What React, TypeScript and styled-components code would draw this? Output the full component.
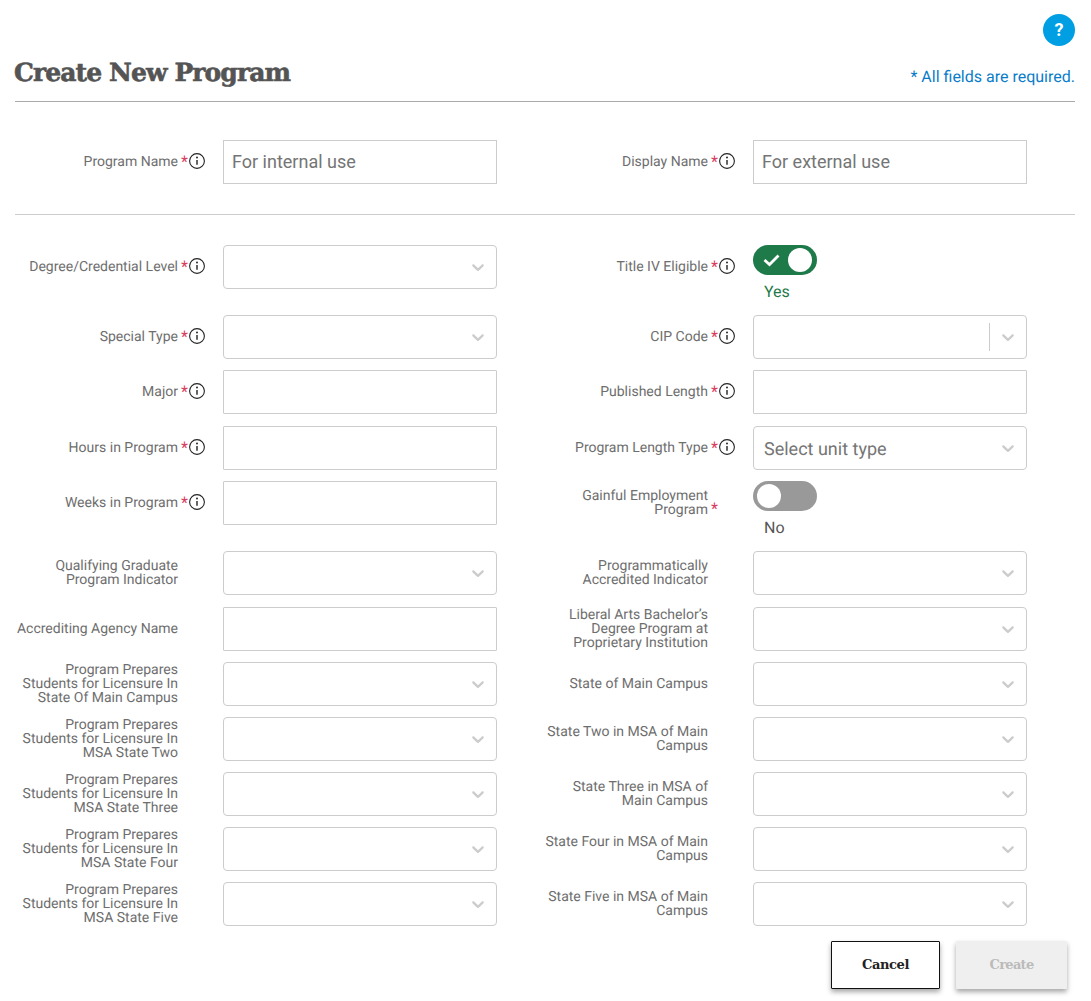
import React, { FunctionComponent, ReactNode } from 'react';
import styled, { createGlobalStyle } from 'styled-components';

const GlobalStyle = createGlobalStyle`
  html, body {
    margin: 0;
    background: #fff;
    font-family: Roboto, "Liberation Sans", sans-serif;
    text-rendering: geometricPrecision;
  }
`;

const Page = styled.div`
  width: 1091px;
  height: 1001px;
  box-sizing: border-box;
  padding: 14px 16px 0 15px;
  overflow: hidden;
`;

const HelpRow = styled.div`
  display: flex;
  justify-content: flex-end;
`;

const HelpButton = styled.button`
  width: 32px;
  height: 32px;
  padding: 0;
  border: 0;
  border-radius: 50%;
  background: #009fe3;
  color: #fff;
  font-family: Roboto, sans-serif;
  font-size: 18px;
  font-weight: 700;
  line-height: 32px;
`;

const Header = styled.div`
  display: flex;
  justify-content: space-between;
  align-items: flex-end;
  height: 56px;
  padding-bottom: 12px;
  box-sizing: border-box;
  border-bottom: 1px solid #aaa;
`;

const Title = styled.h1`
  margin: 0 0 -1px -1px;
  font-family: "DejaVu Serif", serif;
  font-size: 25px;
  font-weight: 700;
  line-height: 34px;
  letter-spacing: -0.9px;
  color: #545454;
  -webkit-text-stroke: 0.6px #545454;
`;

const RequiredNote = styled.div`
  font-size: 16px;
  line-height: 24px;
  color: #0a7cc9;
`;

const NameSection = styled.div`
  padding: 38px 0 30px;
  border-bottom: 1px solid #ccc;
`;

const Details = styled.div`
  padding-top: 30px;
`;

const Row = styled.div<{ $pitch: number }>`
  display: grid;
  grid-template-columns: 482px 482px;
  column-gap: 48px;
  height: ${(p) => p.$pitch}px;
`;

const Field = styled.div`
  display: grid;
  grid-template-columns: 190px 274px;
  column-gap: 18px;
  align-items: start;
`;

const LabelCell = styled.div<{ $bottom?: boolean }>`
  display: flex;
  justify-content: flex-end;
  align-items: ${(p) => (p.$bottom ? 'flex-end' : 'center')};
  min-height: 44px;
  padding-bottom: ${(p) => (p.$bottom ? '8px' : '0')};
  box-sizing: border-box;
`;

const LabelText = styled.label`
  width: 163px;
  flex: none;
  text-align: right;
  font-size: 14px;
  line-height: 14px;
  color: #6e6e6e;
`;

const Marks = styled.div`
  width: 27px;
  flex: none;
  display: flex;
  align-items: center;
  height: 16px;
`;

const Star = styled.span`
  width: 11px;
  padding-left: 3px;
  box-sizing: border-box;
  font-size: 16px;
  line-height: 16px;
  color: #d8405f;
`;

const InfoSvg = styled.svg`
  width: 16px;
  height: 16px;
  margin-bottom: 2px;
  flex: none;
`;

const TextBox = styled.input<{ $square?: boolean }>`
  display: block;
  width: 100%;
  height: 44px;
  box-sizing: border-box;
  padding: 0 8px 2px;
  border: 1px solid #ccc;
  border-radius: ${(p) => (p.$square ? '0' : '1px')};
  outline: none;
  background: #fff;
  font-family: Roboto, sans-serif;
  font-size: 18px;
  color: #333;

  &::placeholder {
    color: #757575;
    opacity: 1;
  }
`;

const SelectBox = styled.div`
  display: flex;
  align-items: center;
  height: 44px;
  box-sizing: border-box;
  border: 1px solid #ccc;
  border-radius: 4px;
  background: #fff;
`;

const SelectValue = styled.div`
  flex: 1;
  padding: 2px 0 0 10px;
  font-size: 18px;
  color: #757575;
`;

const Separator = styled.span`
  width: 1px;
  height: 28px;
  background: #ccc;
`;

const Chevron = styled.svg`
  width: 20px;
  height: 20px;
  margin: 0 8px;
  fill: #ccc;
  flex: none;
`;

const ToggleWrap = styled.div`
  display: flex;
  flex-direction: column;
  align-items: flex-start;
`;

const Track = styled.div<{ $on?: boolean }>`
  display: flex;
  align-items: center;
  justify-content: ${(p) => (p.$on ? 'space-between' : 'flex-start')};
  width: 64px;
  height: 30px;
  box-sizing: border-box;
  padding: 0 5px 0 ${(p) => (p.$on ? '10px' : '4px')};
  border-radius: 15px;
  background: ${(p) => (p.$on ? '#1f7a4a' : '#999')};
`;

const Knob = styled.span`
  width: 24px;
  height: 24px;
  border-radius: 50%;
  background: #fff;
`;

const ToggleText = styled.span<{ $on?: boolean }>`
  margin: 7px 0 0 11px;
  font-size: 16px;
  line-height: 19px;
  color: ${(p) => (p.$on ? '#1f7a4a' : '#555')};
`;

const Footer = styled.div`
  display: flex;
  justify-content: flex-end;
  gap: 16px;
  margin: 15px 8px 0 0;
`;

const Button = styled.button<{ $disabled?: boolean }>`
  height: 48px;
  width: ${(p) => (p.$disabled ? '111px' : '109px')};
  box-sizing: border-box;
  padding: 0 0 2px;
  border: ${(p) => (p.$disabled ? '0' : '1px solid #111')};
  border-radius: 1px;
  background: ${(p) => (p.$disabled ? '#f0efef' : '#fff')};
  box-shadow: 0 3px 5px rgba(0, 0, 0, 0.35);
  font-family: "DejaVu Serif", serif;
  font-size: 13px;
  font-weight: 700;
  letter-spacing: ${(p) => (p.$disabled ? '-0.7px' : '-0.4px')};
  color: ${(p) => (p.$disabled ? '#bbb' : '#222')};
`;

const InfoIcon: FunctionComponent = () => (
  <InfoSvg viewBox="0 0 16 16" fill="none">
    <circle cx="8" cy="8" r="7.4" stroke="#222" strokeWidth="1.1" />
    <circle cx="8" cy="4.5" r="0.95" fill="#222" />
    <path d="M8 7V11.8" stroke="#222" strokeWidth="1.4" />
  </InfoSvg>
);

const ChevronIcon: FunctionComponent = () => (
  <Chevron viewBox="0 0 20 20">
    <path d="M4.516 7.548c0.436-0.446 1.043-0.481 1.576 0l3.908 3.747 3.908-3.747c0.533-0.481 1.141-0.446 1.576 0 0.436 0.445 0.408 1.197 0 1.615-0.406 0.418-4.695 4.502-4.695 4.502-0.217 0.223-0.502 0.335-0.789 0.335s-0.572-0.112-0.79-0.335c0 0-4.287-4.084-4.695-4.502s-0.436-1.17 0-1.615z" />
  </Chevron>
);

type LabelProps = {
  text: ReactNode;
  required?: boolean;
  info?: boolean;
  bottom?: boolean;
};

const Label: FunctionComponent<LabelProps> = ({ text, required, info, bottom }) => (
  <LabelCell $bottom={bottom}>
    <LabelText>{text}</LabelText>
    <Marks>
      {required ? <Star>*</Star> : null}
      {info ? <InfoIcon /> : null}
    </Marks>
  </LabelCell>
);

const Select: FunctionComponent<{ value?: string; separator?: boolean }> = ({ value, separator }) => (
  <SelectBox>
    <SelectValue>{value}</SelectValue>
    {separator ? <Separator /> : null}
    <ChevronIcon />
  </SelectBox>
);

const Toggle: FunctionComponent<{ on?: boolean }> = ({ on }) => (
  <ToggleWrap>
    <Track $on={on}>
      {on ? (
        <svg width="18" height="16" viewBox="0 0 18 16" fill="none">
          <path d="M1.5 8L6.5 12.5L15.5 3.5" stroke="#fff" strokeWidth="2.8" />
        </svg>
      ) : null}
      <Knob />
    </Track>
    <ToggleText $on={on}>{on ? 'Yes' : 'No'}</ToggleText>
  </ToggleWrap>
);

type FieldDef = LabelProps & { control: ReactNode };

const sel = <Select />;
const txt = <TextBox />;

const rows: { pitch: number; left: FieldDef; right: FieldDef }[] = [
  {
    pitch: 70,
    left: { text: 'Degree/Credential Level', required: true, info: true, control: sel },
    right: { text: 'Title IV Eligible', required: true, info: true, control: <Toggle on /> },
  },
  {
    pitch: 55,
    left: { text: 'Special Type', required: true, info: true, control: sel },
    right: { text: 'CIP Code', required: true, info: true, control: <Select separator /> },
  },
  {
    pitch: 56,
    left: { text: 'Major', required: true, info: true, control: txt },
    right: { text: 'Published Length', required: true, info: true, control: txt },
  },
  {
    pitch: 55,
    left: { text: 'Hours in Program', required: true, info: true, control: txt },
    right: {
      text: 'Program Length Type',
      required: true,
      info: true,
      control: <Select value="Select unit type" />,
    },
  },
  {
    pitch: 70,
    left: { text: 'Weeks in Program', required: true, info: true, control: txt },
    right: { text: 'Gainful Employment Program', required: true, bottom: true, control: <Toggle /> },
  },
  {
    pitch: 56,
    left: { text: 'Qualifying Graduate Program Indicator', control: sel },
    right: { text: 'Programmatically Accredited Indicator', control: sel },
  },
  {
    pitch: 55,
    left: { text: 'Accrediting Agency Name', control: txt },
    right: { text: 'Liberal Arts Bachelor’s Degree Program at Proprietary Institution', control: sel },
  },
  {
    pitch: 55,
    left: { text: 'Program Prepares Students for Licensure In State Of Main Campus', control: sel },
    right: { text: 'State of Main Campus', control: sel },
  },
  {
    pitch: 55,
    left: { text: 'Program Prepares Students for Licensure In MSA State Two', control: sel },
    right: { text: 'State Two in MSA of Main Campus', control: sel },
  },
  {
    pitch: 55,
    left: { text: 'Program Prepares Students for Licensure In MSA State Three', control: sel },
    right: { text: 'State Three in MSA of Main Campus', control: sel },
  },
  {
    pitch: 55,
    left: { text: 'Program Prepares Students for Licensure In MSA State Four', control: sel },
    right: { text: 'State Four in MSA of Main Campus', control: sel },
  },
  {
    pitch: 44,
    left: { text: 'Program Prepares Students for Licensure In MSA State Five', control: sel },
    right: { text: 'State Five in MSA of Main Campus', control: sel },
  },
];

const renderField = ({ control, ...label }: FieldDef) => (
  <Field>
    <Label {...label} />
    {control}
  </Field>
);

export default function App() {
  return (
    <Page>
      <GlobalStyle />
      <HelpRow>
        <HelpButton>?</HelpButton>
      </HelpRow>
      <Header>
        <Title>Create New Program</Title>
        <RequiredNote>* All fields are required.</RequiredNote>
      </Header>
      <NameSection>
        <Row $pitch={44}>
          {renderField({
            text: 'Program Name',
            required: true,
            info: true,
            control: <TextBox $square placeholder="For internal use" />,
          })}
          {renderField({
            text: 'Display Name',
            required: true,
            info: true,
            control: <TextBox $square placeholder="For external use" />,
          })}
        </Row>
      </NameSection>
      <Details>
        {rows.map((row, i) => (
          <Row key={i} $pitch={row.pitch}>
            {renderField(row.left)}
            {renderField(row.right)}
          </Row>
        ))}
      </Details>
      <Footer>
        <Button>Cancel</Button>
        <Button $disabled>Create</Button>
      </Footer>
    </Page>
  );
}
